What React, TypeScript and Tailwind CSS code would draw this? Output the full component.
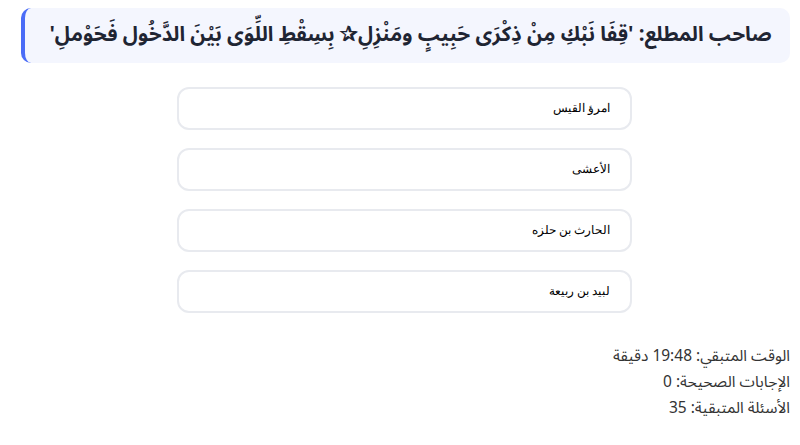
import React from "react";

const options = ["امرؤ القيس", "الأعشى", "الحارث بن حلزه", "لبيد بن ربيعة"];

export default function App() {
  return (
    <div dir="rtl" className="w-[800px] h-[445px] bg-white overflow-hidden" style={{ fontFamily: '"Noto Sans Arabic", "Noto Sans", sans-serif' }}>
      <div className="pt-[8px] pr-[10px] pl-[21px]">
        <div className="h-[55px] rounded-[10px] bg-[#f4f6fe] border-l-[4px] border-[#4a6cf7] flex items-center justify-center pl-[10px] pr-[4px]">
          <h1 className="text-[20.5px] font-bold text-[#1f2533] leading-none whitespace-nowrap">
            صاحب المطلع: 'قِفَا نَبْكِ مِنْ ذِكْرَى حَبِيبٍ ومَنْزِلِ✰ بِسِقْطِ اللِّوَى بَيْنَ الدَّخُول فَحَوْملِ'
          </h1>
        </div>
      </div>
      <div className="flex flex-col gap-[18px] mt-[24px] mr-[168px] w-[455px]">
        {options.map((o) => (
          <div key={o} className="h-[43px] rounded-[12px] border-2 border-[#e8eaef] bg-white flex items-center pr-[20px]">
            <span className="text-[11.5px] font-medium text-black" style={{ fontFamily: '"Liberation Sans", Arial, sans-serif' }}>{o}</span>
          </div>
        ))}
      </div>
      <div className="mt-[30px] pr-[10px] text-[15.5px] text-[#333] leading-[26px]">
        <div>الوقت المتبقي: 19:48 دقيقة</div>
        <div>الإجابات الصحيحة: 0</div>
        <div>الأسئلة المتبقية: 35</div>
      </div>
    </div>
  );
}
